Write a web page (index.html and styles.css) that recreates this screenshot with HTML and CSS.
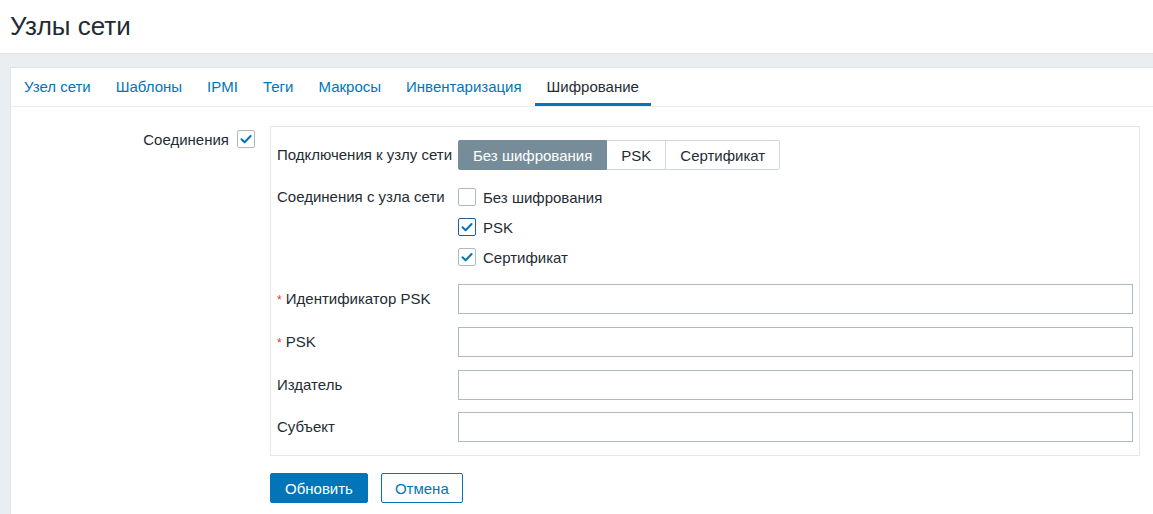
FILE: index.html
```html
<!DOCTYPE html>
<html lang="ru">
<head>
<meta charset="utf-8">
<title>Узлы сети</title>
<link rel="stylesheet" href="styles.css">
</head>
<body>
<header class="page-header">
  <h1 class="page-title">Узлы сети</h1>
</header>
<main class="page-body">
  <div class="card">
    <ul class="tabs">
      <li class="tab"><a href="#">Узел сети</a></li>
      <li class="tab"><a href="#">Шаблоны</a></li>
      <li class="tab"><a href="#">IPMI</a></li>
      <li class="tab"><a href="#">Теги</a></li>
      <li class="tab"><a href="#">Макросы</a></li>
      <li class="tab"><a href="#">Инвентаризация</a></li>
      <li class="tab tab-active"><a href="#">Шифрование</a></li>
    </ul>
    <form class="form">
      <label class="row-label">Соединения</label>
      <span class="cb cb-outer"><svg viewBox="0 0 16 16" class="tick"><path d="M3.5 8.2 L6.6 11.2 L12.6 5"/></svg></span>
      <fieldset class="tls-box">
        <div class="fl-label">Подключения к узлу сети</div>
        <div class="segmented">
          <span class="seg seg-on">Без шифрования</span>
          <span class="seg">PSK</span>
          <span class="seg">Сертификат</span>
        </div>

        <div class="fl-label">Соединения с узла сети</div>
        <ul class="cb-list">
          <li class="cb-item"><span class="cb"></span>Без шифрования</li>
          <li class="cb-item"><span class="cb cb-focus"><svg viewBox="0 0 16 16" class="tick"><path d="M3.5 8.2 L6.6 11.2 L12.6 5"/></svg></span>PSK</li>
          <li class="cb-item"><span class="cb"><svg viewBox="0 0 16 16" class="tick"><path d="M3.5 8.2 L6.6 11.2 L12.6 5"/></svg></span>Сертификат</li>
        </ul>

        <div class="fl-label"><span class="req">*</span> Идентификатор PSK</div>
        <input class="text-input" type="text">

        <div class="fl-label"><span class="req">*</span> PSK</div>
        <input class="text-input" type="text">

        <div class="fl-label">Издатель</div>
        <input class="text-input" type="text">

        <div class="fl-label">Субъект</div>
        <input class="text-input" type="text">
      </fieldset>
      <div class="actions">
        <button type="button" class="btn btn-primary">Обновить</button>
        <button type="button" class="btn btn-alt">Отмена</button>
      </div>
    </form>
  </div>
</main>
</body>
</html>
```

FILE: styles.css
```css
* { box-sizing: border-box; }
html, body { margin: 0; padding: 0; }
body {
  font-family: "Liberation Sans", Arial, sans-serif;
  font-size: 15px;
  color: #1f2c33;
  background: #ebeef0;
  height: 514px;
  overflow: hidden;
}
.page-header {
  background: #fff;
  height: 54px;
  border-bottom: 1px solid #dde2e5;
  padding-left: 10px;
  display: flex;
  align-items: center;
}
.page-title {
  margin: 0;
  font-size: 26px;
  font-weight: normal;
  line-height: 30px;
  color: #1f2c33;
  padding-bottom: 2px;
}
.page-body {
  padding: 13px 0 0 10px;
}
.card {
  background: #fff;
  border-left: 1px solid #dfe4e7;
  border-top: 1px solid #dfe4e7;
  min-height: 460px;
}
.tabs {
  list-style: none;
  margin: 0;
  padding: 0 0 0 1px;
  display: flex;
  border-bottom: 1px solid #ebeef0;
  height: 39px;
}
.tab a {
  display: block;
  height: 38px;
  line-height: 38px;
  padding: 0 12px 0 12px;
  margin-right: 1px;
  color: #0275b8;
  text-decoration: none;
}
.tab-active a {
  color: #1f2c33;
  border-bottom: 3px solid #0275b8;
  line-height: 38px;
}
.form {
  display: grid;
  grid-template-columns: 226px 33px 1fr;
  row-gap: 17px;
  padding: 19px 13px 0 0;
  align-items: start;
}
.row-label {
  text-align: right;
  padding-right: 8px;
  margin-top: 5px;
  line-height: 18px;
}
.cb {
  width: 18px;
  height: 18px;
  border: 1px solid #acbbc2;
  border-radius: 2px;
  background: #fff;
  display: inline-flex;
  align-items: center;
  justify-content: center;
  flex: none;
}
.cb-outer {
  width: 18px;
  height: 18px;
  margin-top: 4px;
}
.cb-focus { border-color: #1f5f94; }
.tick {
  width: 16px;
  height: 16px;
  fill: none;
  stroke: #0275b8;
  stroke-width: 2;
  stroke-linecap: round;
  stroke-linejoin: round;
}
.tls-box {
  margin: 0;
  min-width: 0;
  border: 1px solid #e4e8ea;
  padding: 13px 6px 13px 6px;
  display: grid;
  grid-template-columns: 175px 1fr;
  column-gap: 6px;
  row-gap: 12px;
  align-items: start;
}
.fl-label {
  line-height: 30px;
  white-space: nowrap;
}
.req {
  color: #e33734;
  font-size: 12px;
}
.segmented {
  display: flex;
  height: 30px;
}
.seg {
  display: flex;
  align-items: center;
  padding: 0 14px;
  border: 1px solid #cfd8dc;
  border-left-width: 0;
  background: #fff;
  color: #1f2c33;
}
.seg:first-child {
  border-left-width: 1px;
  border-radius: 2px 0 0 2px;
}
.seg:last-child { border-radius: 0 2px 2px 0; }
.seg-on {
  background: #768d99;
  border-color: #768d99;
  color: #fff;
}
.cb-list {
  list-style: none;
  margin: 0;
  padding: 0;
}
.cb-item {
  height: 30px;
  display: flex;
  align-items: center;
  gap: 7px;
}
.text-input {
  display: block;
  width: 100%;
  height: 30px;
  margin: 0;
  border: 1px solid #acbbc2;
  border-radius: 0;
  background: #fff;
  font: inherit;
  padding: 0 5px;
}
.actions {
  grid-column: 3;
  display: flex;
  gap: 13px;
}
.btn {
  height: 30px;
  padding: 0 14px;
  font-family: inherit;
  font-size: 15px;
  border-radius: 2px;
  border: 1px solid #0275b8;
  cursor: pointer;
}
.btn-primary {
  background: #0275b8;
  color: #fff;
}
.btn-alt {
  background: #fff;
  color: #0275b8;
  padding: 0 13px;
}
```
